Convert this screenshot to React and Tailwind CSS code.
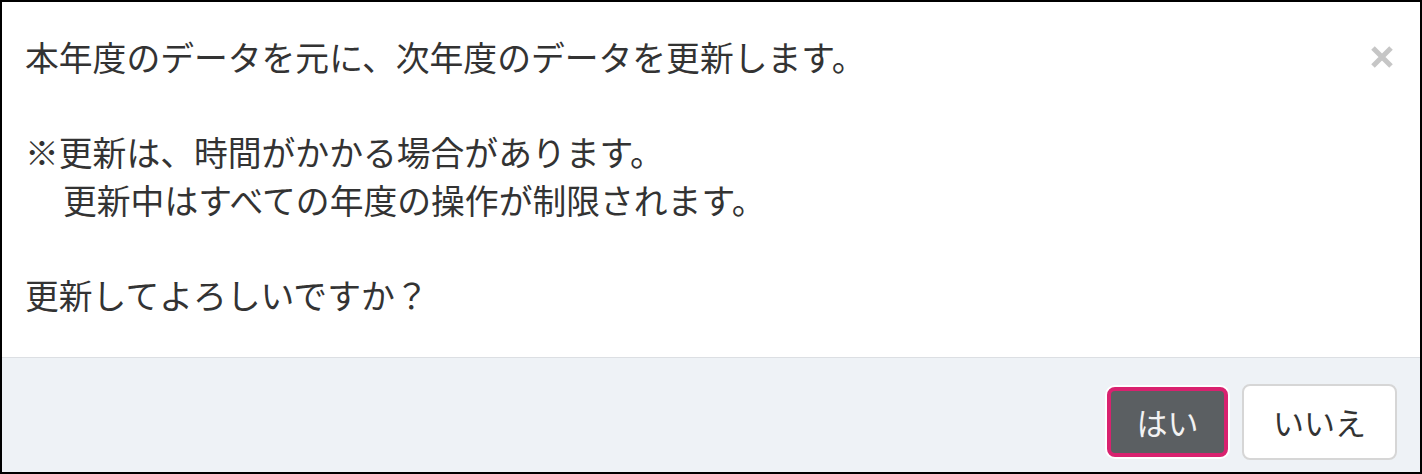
import React from "react";

const font = {
  fontFamily: '"Noto Sans CJK JP", "Noto Sans", sans-serif',
};

const CloseIcon = () => (
  <svg width="24" height="22" viewBox="0 0 24 22" aria-hidden="true">
    <path d="M3 2 L21 20 M21 2 L3 20" stroke="#c6c6c6" strokeWidth="5" strokeLinecap="butt" />
  </svg>
);

export default function App() {
  return (
    <div
      className="w-[1422px] h-[474px] border-2 border-black bg-white flex flex-col overflow-hidden"
      style={font}
    >
      {/* body */}
      <div className="flex-1 flex items-start pl-[23px] pr-[26px] pt-[31px]">
        <div className="flex-1 text-[33.8px] leading-[47.6px] text-[#333]">
          <p>本年度のデータを元に、次年度のデータを更新します。</p>
          <p>&nbsp;</p>
          <p>※更新は、時間がかかる場合があります。</p>
          <p className="pl-[38px]">更新中はすべての年度の操作が制限されます。</p>
          <p>&nbsp;</p>
          <p>更新してよろしいですか？</p>
        </div>
        <button className="h-[48px] flex items-center justify-center">
          <CloseIcon />
        </button>
      </div>

      {/* footer */}
      <div className="h-[115px] border-t border-[#dcdfe3] bg-[#eef2f6] flex items-center justify-end gap-[14px] pt-[14px] pr-[23px]">
        <button className="w-[121px] h-[70px] rounded-lg border-4 border-[#d9226f] bg-[#5b5f62] text-[#f2f2f2] text-[31px] ring-2 ring-white">
          はい
        </button>
        <button className="w-[155px] h-[76px] rounded-lg border-2 border-[#d6d6d6] bg-white text-[#333] text-[31px]">
          いいえ
        </button>
      </div>
    </div>
  );
}
